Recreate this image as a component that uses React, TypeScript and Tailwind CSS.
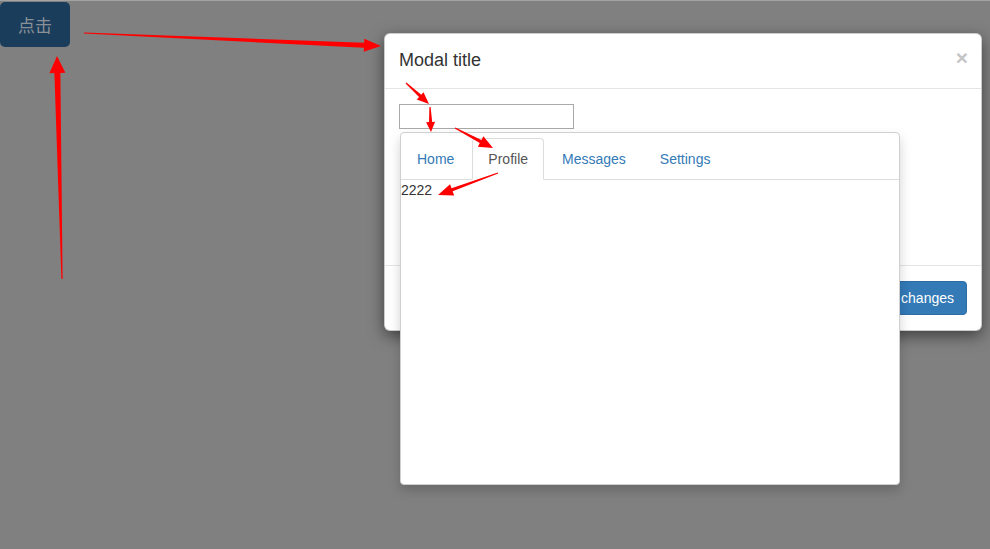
import React from "react";

type Pt = [number, number];

// tapered annotation arrow: thin tail, wider shaft near head, triangle head
function arrowPoints(tail: Pt, tip: Pt, headLen: number, headHalf: number, shaftHalf: number) {
  const dx = tip[0] - tail[0];
  const dy = tip[1] - tail[1];
  const len = Math.hypot(dx, dy);
  const ux = dx / len;
  const uy = dy / len;
  const nx = -uy;
  const ny = ux;
  const bx = tip[0] - ux * headLen;
  const by = tip[1] - uy * headLen;
  const pts: Pt[] = [
    [tail[0] + nx * 0.6, tail[1] + ny * 0.6],
    [bx + nx * shaftHalf, by + ny * shaftHalf],
    [bx + nx * headHalf, by + ny * headHalf],
    tip,
    [bx - nx * headHalf, by - ny * headHalf],
    [bx - nx * shaftHalf, by - ny * shaftHalf],
    [tail[0] - nx * 0.6, tail[1] - ny * 0.6],
  ];
  return pts.map((p) => p.join(",")).join(" ");
}

const ARROWS: { tail: Pt; tip: Pt; hl: number; hh: number; sh: number }[] = [
  { tail: [84, 33], tip: [381, 46], hl: 17, hh: 6.5, sh: 2.6 },
  { tail: [62, 279], tip: [57, 56], hl: 17, hh: 8, sh: 3 },
  { tail: [406, 83], tip: [429, 104], hl: 12, hh: 5, sh: 1.6 },
  { tail: [430, 107], tip: [431, 132], hl: 10, hh: 4.5, sh: 1.6 },
  { tail: [455, 128], tip: [493, 148], hl: 14, hh: 6, sh: 1.8 },
  { tail: [498, 173], tip: [438, 195], hl: 15, hh: 6, sh: 1.6 },
];

const TABS = ["Home", "Profile", "Messages", "Settings"];

export default function App() {
  return (
    <div className="relative h-[549px] w-[990px] overflow-hidden bg-[#808080] font-['Liberation_Sans',Arial,sans-serif] text-[14px] text-[#333]">
      <div className="h-px bg-[#a3a3a3]" />
      <button className="mt-px h-[45px] w-[70px] rounded-[5px] bg-[#1a3d5c] font-['Noto_Sans_CJK_SC',serif] text-[17px] text-[#8b9097]">
        点击
      </button>

      {/* modal */}
      <div className="absolute left-[384px] top-[33px] w-[598px] rounded-[6px] border border-black/20 bg-white shadow-[0_5px_15px_rgba(0,0,0,0.5)]">
        <div className="flex items-center justify-between border-b border-[#e5e5e5] pb-[15px] pl-[14px] pr-[13px] pt-[14px]">
          <h4 className="text-[18px] leading-[25px] text-[#333]">Modal title</h4>
          <span className="-mt-[6px] text-[21px] font-bold leading-none text-[#c4c4c4]">×</span>
        </div>
        <div className="relative h-[176px] px-[14px] py-[15px]">
          <input className="block h-[25px] w-[175px] border border-[#a9a9a9] bg-white" />
          <div className="absolute left-[15px] top-[43px] z-10 h-[353px] w-[500px] rounded-[4px] border border-[#d0d0d0] bg-white shadow-[0_6px_12px_rgba(0,0,0,0.175)]">
            <ul className="mt-[5px] flex border-b border-[#ddd]">
              {TABS.map((t) => (
                <li key={t} className="-mb-px mr-[2px]">
                  {t === "Profile" ? (
                    <span className="block rounded-t-[4px] border border-[#ddd] border-b-transparent bg-white px-[15px] py-[10px] leading-[20px] text-[#555]">
                      {t}
                    </span>
                  ) : (
                    <span className="block border border-transparent px-[15px] py-[10px] leading-[20px] text-[#337ab7]">
                      {t}
                    </span>
                  )}
                </li>
              ))}
            </ul>
            <div className="leading-[20px] text-[#333]">2222</div>
          </div>
        </div>
        <div className="flex justify-end gap-[5px] border-t border-[#e5e5e5] py-[15px] pl-[14px] pr-[14px]">
          <button className="h-[34px] rounded-[4px] border border-[#ccc] bg-white px-[12px] text-[14px] text-[#333]">
            Close
          </button>
          <button className="h-[34px] rounded-[4px] border border-[#2e6da4] bg-[#337ab7] px-[12px] text-[14px] text-white">
            Save changes
          </button>
        </div>
      </div>

      {/* red annotation arrows */}
      <svg className="pointer-events-none absolute left-0 top-0 z-20" width="990" height="549">
        {ARROWS.map((a, i) => (
          <polygon key={i} points={arrowPoints(a.tail, a.tip, a.hl, a.hh, a.sh)} fill="#ff0000" />
        ))}
      </svg>
    </div>
  );
}
